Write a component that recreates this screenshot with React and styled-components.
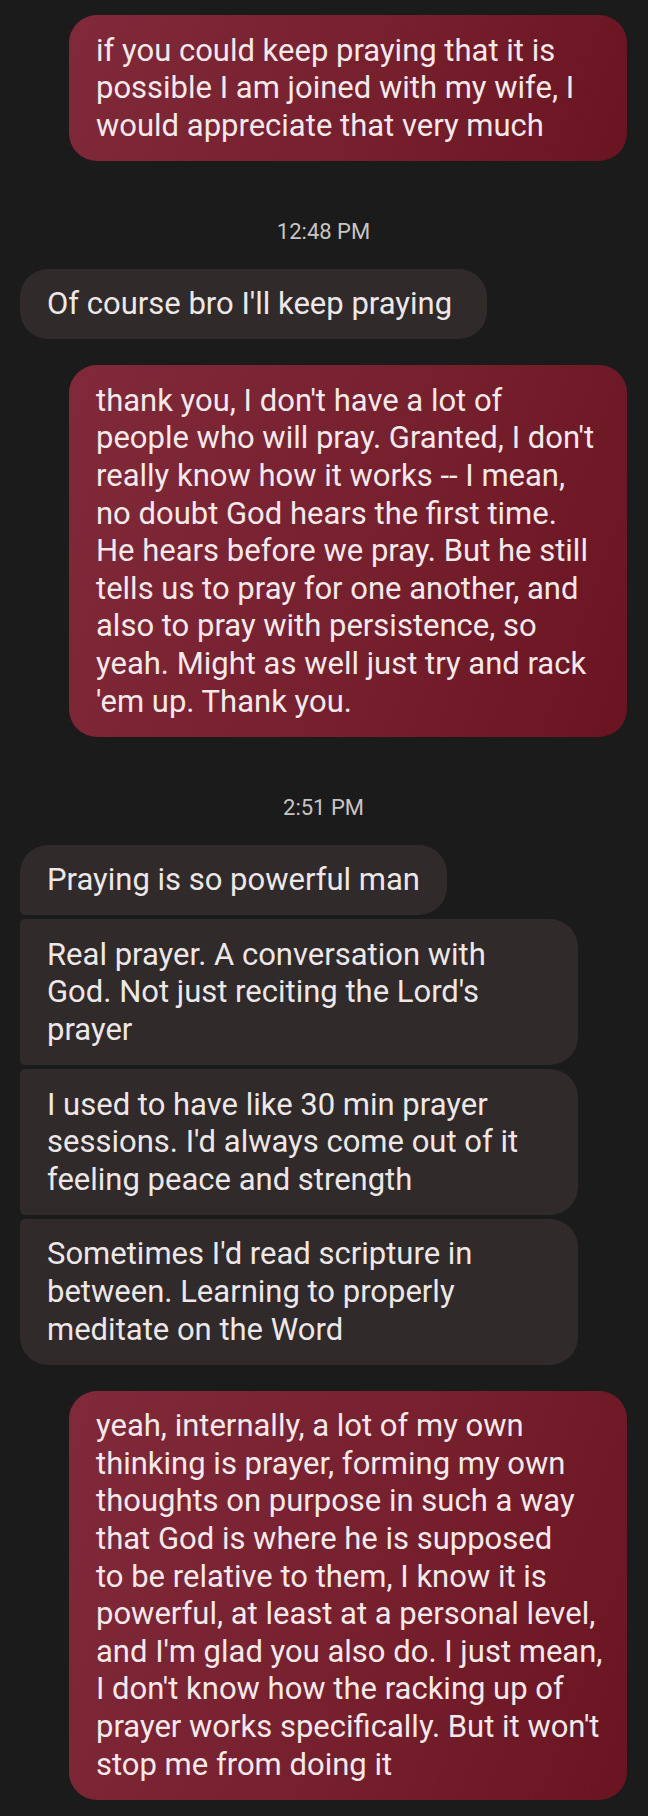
import React from "react";
import styled, { createGlobalStyle, css } from "styled-components";

const GlobalStyle = createGlobalStyle`
  html, body {
    margin: 0;
    padding: 0;
    background: #1b1b1b;
  }
  #root {
    min-height: 1816px;
    background: #1b1b1b;
  }
`;

const Thread = styled.main`
  display: flex;
  flex-direction: column;
  padding: 15px 21px 14px 20px;
  font-family: Roboto, "Noto Sans", "Liberation Sans", sans-serif;
  background: #1b1b1b;
`;

const Timestamp = styled.div`
  align-self: center;
  margin: 56px 0 22px;
  font-size: 22px;
  line-height: 30px;
  color: #c9c4c4;
  letter-spacing: 0;
`;

const Group = styled.section`
  display: flex;
  flex-direction: column;
  gap: 4px;
  align-items: ${(p) => (p.$side === "out" ? "flex-end" : "flex-start")};
  margin-top: ${(p) => (p.$spaced ? "26px" : "0")};
`;

const BIG = 28;
const SMALL = 5;

const radius = (side, pos) => {
  // pos: single | first | middle | last
  const topNear = pos === "single" || pos === "first" ? BIG : SMALL;
  const bottomNear = pos === "single" || pos === "last" ? BIG : SMALL;
  if (side === "in") {
    return `${topNear}px ${BIG}px ${BIG}px ${bottomNear}px`;
  }
  return `${BIG}px ${topNear}px ${bottomNear}px ${BIG}px`;
};

const Bubble = styled.div`
  box-sizing: border-box;
  width: ${(p) => (p.$wide ? "558px" : "auto")};
  padding: 16.5px 27px;
  font-size: 31px;
  line-height: 37.6px;
  white-space: pre;
  border-radius: ${(p) => radius(p.$side, p.$pos)};
  ${(p) =>
    p.$side === "out"
      ? css`
          background: linear-gradient(110deg, #80293a 0%, #76202e 55%, #6a1422 100%);
          color: #f3e8ea;
        `
      : css`
          background: #302a2b;
          color: #ede7e7;
        `}
`;

const thread = [
  {
    type: "group",
    side: "out",
    messages: [
      [
        "if you could keep praying that it is",
        "possible I am joined with my wife, I",
        "would appreciate that very much",
      ],
    ],
  },
  { type: "time", label: "12:48 PM" },
  {
    type: "group",
    side: "in",
    messages: [["Of course bro I'll keep praying "]],
  },
  {
    type: "group",
    side: "out",
    messages: [
      [
        "thank you, I don't have a lot of",
        "people who will pray. Granted, I don't",
        "really know how it works -- I mean,",
        "no doubt God hears the first time.",
        "He hears before we pray. But he still",
        "tells us to pray for one another, and",
        "also to pray with persistence, so",
        "yeah. Might as well just try and rack",
        "'em up. Thank you.",
      ],
    ],
  },
  { type: "time", label: "2:51 PM" },
  {
    type: "group",
    side: "in",
    messages: [
      ["Praying is so powerful man"],
      [
        "Real prayer. A conversation with",
        "God. Not just reciting the Lord's",
        "prayer",
      ],
      [
        "I used to have like 30 min prayer",
        "sessions. I'd always come out of it",
        "feeling peace and strength",
      ],
      [
        "Sometimes I'd read scripture in",
        "between. Learning to properly",
        "meditate on the Word",
      ],
    ],
  },
  {
    type: "group",
    side: "out",
    messages: [
      [
        "yeah, internally, a lot of my own",
        "thinking is prayer, forming my own",
        "thoughts on purpose in such a way",
        "that God is where he is supposed",
        "to be relative to them, I know it is",
        "powerful, at least at a personal level,",
        "and I'm glad you also do. I just mean,",
        "I don't know how the racking up of",
        "prayer works specifically. But it won't",
        "stop me from doing it",
      ],
    ],
  },
];

const position = (i, n) => {
  if (n === 1) return "single";
  if (i === 0) return "first";
  if (i === n - 1) return "last";
  return "middle";
};

export default function App() {
  return (
    <>
      <GlobalStyle />
      <Thread>
        {thread.map((item, idx) => {
          if (item.type === "time") {
            return <Timestamp key={idx}>{item.label}</Timestamp>;
          }
          const prev = thread[idx - 1];
          const spaced = prev && prev.type === "group";
          return (
            <Group key={idx} $side={item.side} $spaced={spaced}>
              {item.messages.map((lines, i) => (
                <Bubble
                  key={i}
                  $side={item.side}
                  $pos={position(i, item.messages.length)}
                  $wide={lines.length > 1}
                >
                  {lines.join("\n")}
                </Bubble>
              ))}
            </Group>
          );
        })}
      </Thread>
    </>
  );
}
